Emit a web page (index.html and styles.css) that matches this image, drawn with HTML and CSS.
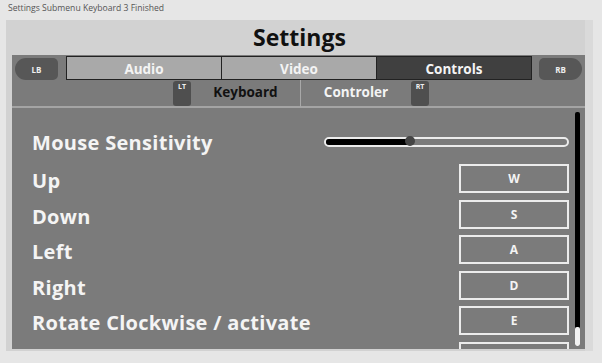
FILE: index.html
```html
<!DOCTYPE html>
<html lang="en">
<head>
  <meta charset="UTF-8" />
  <title>Settings Submenu Keyboard 3 Finished</title>
  <link rel="stylesheet" href="styles.css">
</head>
<body>
  <div class="caption">Settings Submenu Keyboard 3 Finished</div>

  <div class="window">
    <h1 class="title">Settings</h1>

    <div class="panel">
      <div class="tabs">
        <span class="bumper left">LB</span>
        <div class="tab">Audio</div>
        <div class="tab">Video</div>
        <div class="tab active">Controls</div>
        <span class="bumper right">RB</span>
      </div>

      <div class="subtabs">
        <span class="trigger">LT</span>
        <div class="subtab active">Keyboard</div>
        <div class="subtab">Controler</div>
        <span class="trigger">RT</span>
      </div>

      <div class="content">
        <div class="row slider-row">
          <span class="label">Mouse Sensitivity</span>
          <div class="slider">
            <div class="slider-fill"></div>
            <div class="slider-knob"></div>
          </div>
        </div>
        <div class="row">
          <span class="label">Up</span>
          <span class="key">W</span>
        </div>
        <div class="row">
          <span class="label">Down</span>
          <span class="key">S</span>
        </div>
        <div class="row">
          <span class="label">Left</span>
          <span class="key">A</span>
        </div>
        <div class="row">
          <span class="label">Right</span>
          <span class="key">D</span>
        </div>
        <div class="row">
          <span class="label">Rotate Clockwise / activate</span>
          <span class="key">E</span>
        </div>
        <div class="row">
          <span class="label"></span>
          <span class="key"></span>
        </div>

        <div class="scrollbar"><div class="scroll-thumb"></div></div>
      </div>
    </div>
  </div>
</body>
</html>
```

FILE: styles.css
```css
:root {
  --page-bg: #e6e6e6;
  --window-bg: #d2d2d2;
  --panel-bg: #7b7b7b;
  --tab-bg: #a9a9a9;
  --tab-active: #404040;
  --bumper-bg: #575757;
  --text-light: #f4f4f4;
}

* { box-sizing: border-box; }

body {
  margin: 0;
  background: var(--page-bg);
  font-family: 'Open Sans', 'Noto Sans', sans-serif;
  height: 363px;
  overflow: hidden;
}

.caption {
  height: 20px;
  padding: 2px 0 0 8px;
  font-size: 8.6px;
  color: #555;
}

.window {
  margin-left: 6px;
  width: 587px;
  height: 331px;
  background: linear-gradient(to left, #dadada 8px, var(--window-bg) 8px);
  display: flex;
  flex-direction: column;
}

.title {
  margin: 0;
  height: 35px;
  line-height: 35px;
  text-align: center;
  font-size: 23px;
  font-weight: 700;
  color: #111;
}

.panel {
  margin-left: 6px;
  width: 573px;
  height: 294px;
  background: var(--panel-bg);
  display: flex;
  flex-direction: column;
}

.tabs {
  height: 25px;
  display: flex;
  align-items: flex-end;
  padding-left: 3px;
}

.bumper {
  width: 43px;
  height: 22px;
  background: var(--bumper-bg);
  color: #eee;
  font-size: 8px;
  font-weight: 700;
  display: flex;
  align-items: center;
  justify-content: center;
}

.bumper.left {
  border-radius: 11px 5px 5px 11px;
  margin-right: 8px;
}

.bumper.right {
  border-radius: 5px 11px 11px 5px;
  margin-left: 7px;
}

.tab {
  width: 156px;
  height: 24px;
  background: var(--tab-bg);
  border: 1px solid #222;
  margin-left: -1px;
  color: var(--text-light);
  font-size: 13.5px;
  font-weight: 700;
  display: flex;
  align-items: center;
  justify-content: center;
  padding-top: 1px;
}

.tab:first-of-type { margin-left: 0; }

.tab.active { background: var(--tab-active); }

.subtabs {
  height: 28px;
  display: flex;
  padding-left: 161px;
  border-bottom: 2px solid #a4a4a4;
}

.trigger {
  width: 18px;
  height: 25px;
  margin-top: 1px;
  background: #4f4f4f;
  border-radius: 3px;
  color: #eee;
  font-size: 7px;
  font-weight: 700;
  text-align: center;
  line-height: 12px;
}

.subtab {
  width: 110px;
  height: 27px;
  font-size: 13.5px;
  font-weight: 700;
  color: var(--text-light);
  display: flex;
  align-items: center;
  justify-content: center;
  padding-bottom: 4px;
}

.subtab.active {
  color: #111;
  border-right: 1px solid #a8a8a8;
}

.content {
  position: relative;
  flex: 1;
  overflow: hidden;
  padding: 14px 0 0 20px;
}

.row {
  height: 35.6px;
  display: flex;
  align-items: flex-start;
  justify-content: space-between;
  padding-right: 16px;
}

.row.slider-row {
  height: 39px;
  align-items: center;
}

.label {
  color: var(--text-light);
  font-size: 20px;
  font-weight: 700;
  letter-spacing: 0.3px;
  line-height: 26px;
  padding-top: 7px;
}

.slider-row .label { padding-top: 3px; }

.slider {
  position: relative;
  width: 245px;
  height: 10px;
  border: 2px solid #ececec;
  border-radius: 5px;
  background: var(--panel-bg);
}

.slider-fill {
  width: 84px;
  height: 6px;
  background: #000;
  border-radius: 3px;
}

.slider-knob {
  position: absolute;
  left: 79px;
  top: -3px;
  width: 10px;
  height: 10px;
  border-radius: 50%;
  background: #454545;
}

.key {
  width: 110px;
  height: 29px;
  margin-top: 3px;
  border: 2px solid #ececec;
  color: var(--text-light);
  font-size: 12px;
  font-weight: 700;
  display: flex;
  align-items: center;
  justify-content: center;
}

.scrollbar {
  position: absolute;
  left: 563px;
  top: 4px;
  width: 5px;
  height: 234px;
  background: #000;
  border-radius: 2px;
}

.scroll-thumb {
  position: absolute;
  bottom: 0;
  left: 0;
  width: 5px;
  height: 19px;
  background: #f2f2f2;
  border-radius: 2px;
}
```
